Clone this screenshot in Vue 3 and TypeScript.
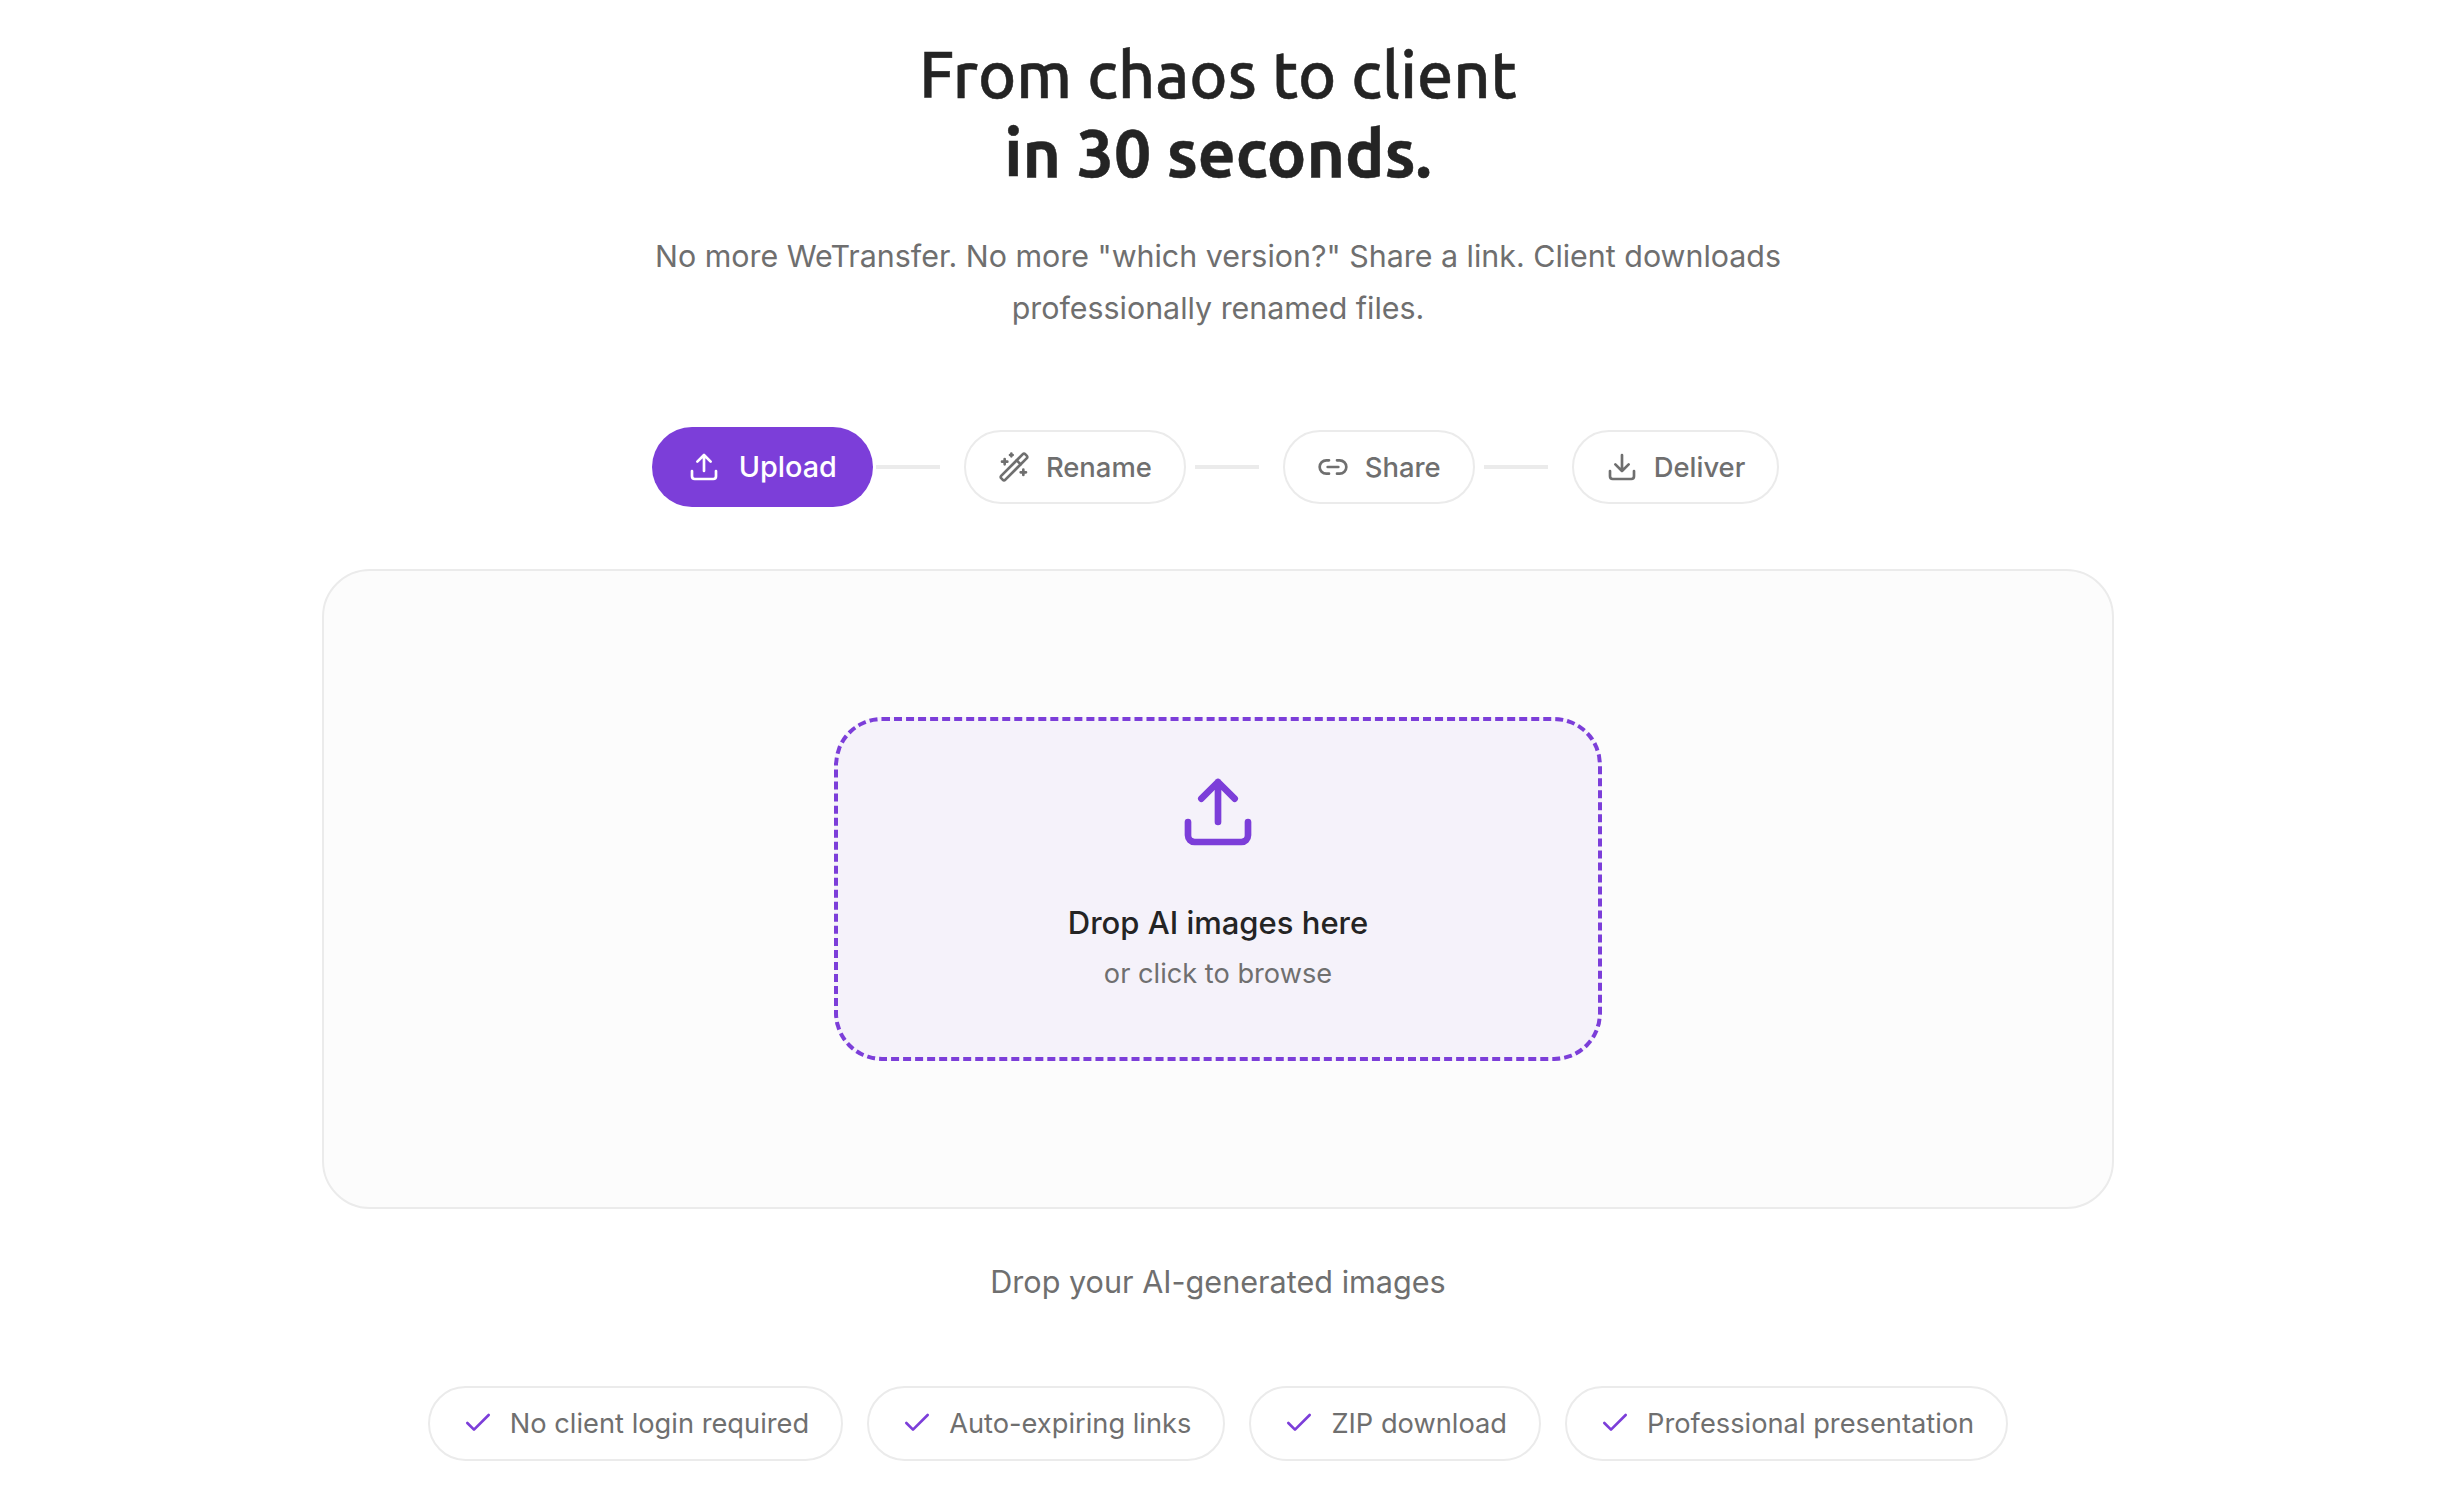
<script setup lang="ts">
interface Step {
  label: string
  icon: string
  active?: boolean
}

const steps: Step[] = [
  { label: "Upload", icon: "upload", active: true },
  { label: "Rename", icon: "wand" },
  { label: "Share", icon: "link" },
  { label: "Deliver", icon: "download" },
]

const perks = ["No client login required", "Auto-expiring links", "ZIP download", "Professional presentation"]
</script>

<template>
  <main class="page">
    <h1 class="title">From chaos to client<br /><strong>in 30 seconds.</strong></h1>
    <p class="lead">No more WeTransfer. No more "which version?" Share a link. Client downloads professionally renamed files.</p>

    <div class="steps">
      <template v-for="(step, i) in steps" :key="step.label">
        <div class="step" :class="{ active: step.active }">
          <svg class="step-icon" viewBox="0 0 24 24" fill="none" stroke="currentColor" stroke-width="2" stroke-linecap="round" stroke-linejoin="round">
            <template v-if="step.icon === 'upload'">
              <path d="M21 15v4a2 2 0 0 1-2 2H5a2 2 0 0 1-2-2v-4M17 8l-5-5-5 5M12 3v12" />
            </template>
            <template v-else-if="step.icon === 'wand'">
              <path d="m21.64 3.64-1.28-1.28a1.21 1.21 0 0 0-1.72 0L2.36 18.64a1.21 1.21 0 0 0 0 1.72l1.28 1.28a1.2 1.2 0 0 0 1.72 0L21.64 5.36a1.2 1.2 0 0 0 0-1.72" />
              <path d="m14 7 3 3M5 6v4M19 14v4M10 2v2M7 8H3M21 16h-4M11 3H9" />
            </template>
            <template v-else-if="step.icon === 'link'">
              <path d="M9 17H7A5 5 0 0 1 7 7h2M15 7h2a5 5 0 1 1 0 10h-2M8 12h8" />
            </template>
            <template v-else>
              <path d="M12 15V3M21 15v4a2 2 0 0 1-2 2H5a2 2 0 0 1-2-2v-4M7 10l5 5 5-5" />
            </template>
          </svg>
          <span>{{ step.label }}</span>
        </div>
        <span v-if="i < steps.length - 1" class="connector"></span>
      </template>
    </div>

    <section class="card">
      <div class="dropzone">
        <svg class="drop-icon" viewBox="0 0 24 24" fill="none" stroke="currentColor" stroke-width="2" stroke-linecap="round" stroke-linejoin="round">
          <path d="M21 15v4a2 2 0 0 1-2 2H5a2 2 0 0 1-2-2v-4M17 8l-5-5-5 5M12 3v12" />
        </svg>
        <div class="drop-title">Drop AI images here</div>
        <div class="drop-sub">or click to browse</div>
      </div>
    </section>

    <p class="hint">Drop your AI-generated images</p>

    <div class="perks">
      <div v-for="perk in perks" :key="perk" class="perk">
        <svg class="check" viewBox="0 0 24 24" fill="none" stroke="currentColor" stroke-width="2" stroke-linecap="round" stroke-linejoin="round">
          <path d="M20 6 9 17l-5-5" />
        </svg>
        <span>{{ perk }}</span>
      </div>
    </div>
  </main>
</template>

<style scoped>
.page {
  display: flex;
  flex-direction: column;
  align-items: center;
  width: 2436px;
  padding-top: 35px;
  font-family: Inter, "Liberation Sans", sans-serif;
  color: #6f6f6f;
}

.title {
  margin: 0;
  font-family: Ubuntu, "Noto Sans", sans-serif;
  font-size: 64.7px;
  line-height: 78.5px;
  font-weight: 500;
  text-align: center;
  color: #242424;
  -webkit-text-stroke: 0.5px #242424;
}

.title strong {
  font-size: 65.9px;
  font-weight: 700;
}

.lead {
  width: 1200px;
  margin: 38px 0 0;
  font-size: 30.4px;
  line-height: 52px;
  text-align: center;
}

.steps {
  display: flex;
  align-items: center;
  margin-top: 92.5px;
}

.step {
  display: flex;
  align-items: center;
  gap: 16px;
  box-sizing: border-box;
  height: 74px;
  padding: 0 32px;
  border: 2px solid #ebebeb;
  border-radius: 40px;
  font-size: 27.4px;
  font-weight: 500;
  background: #fff;
}

.step.active {
  height: 80px;
  margin: 0 -6px 0 -5px;
  padding: 0 36px;
  gap: 19px;
  border: 0;
  color: #fff;
  font-size: 28.8px;
  background: #7c3ed9;
}

.step-icon {
  width: 32px;
  height: 32px;
}

.connector {
  width: 64px;
  height: 4px;
  margin: 0 24px 0 9px;
  background: #ebebeb;
}

.card {
  display: flex;
  justify-content: center;
  box-sizing: border-box;
  width: 1792px;
  height: 640px;
  margin-top: 62px;
  padding-top: 146px;
  border: 2px solid #ebebeb;
  border-radius: 48px;
  background: #fcfcfc;
}

.dropzone {
  display: flex;
  flex-direction: column;
  align-items: center;
  box-sizing: border-box;
  width: 768px;
  height: 344px;
  padding-top: 51px;
  border: 4px dashed #7c3ed9;
  border-radius: 48px;
  background: #f5f2fa;
}

.drop-icon {
  width: 80px;
  height: 80px;
  color: #7c3ed9;
}

.drop-title {
  margin-top: 47px;
  font-size: 31px;
  line-height: 48px;
  font-weight: 500;
  color: #242424;
}

.drop-sub {
  margin-top: 7px;
  font-size: 27.2px;
  line-height: 40px;
}

.hint {
  margin: 51px 0 0;
  font-size: 30.6px;
  line-height: 44px;
}

.perks {
  display: flex;
  gap: 24px;
  margin-top: 82px;
}

.perk {
  display: flex;
  align-items: center;
  gap: 16px;
  box-sizing: border-box;
  height: 75px;
  padding: 0 32px;
  border: 2px solid #ebebeb;
  border-radius: 40px;
  font-size: 27.25px;
  background: #fff;
}

.check {
  width: 32px;
  height: 32px;
  color: #7c3ed9;
}
</style>

<style>
html,
body {
  background: #fff;
}
</style>
